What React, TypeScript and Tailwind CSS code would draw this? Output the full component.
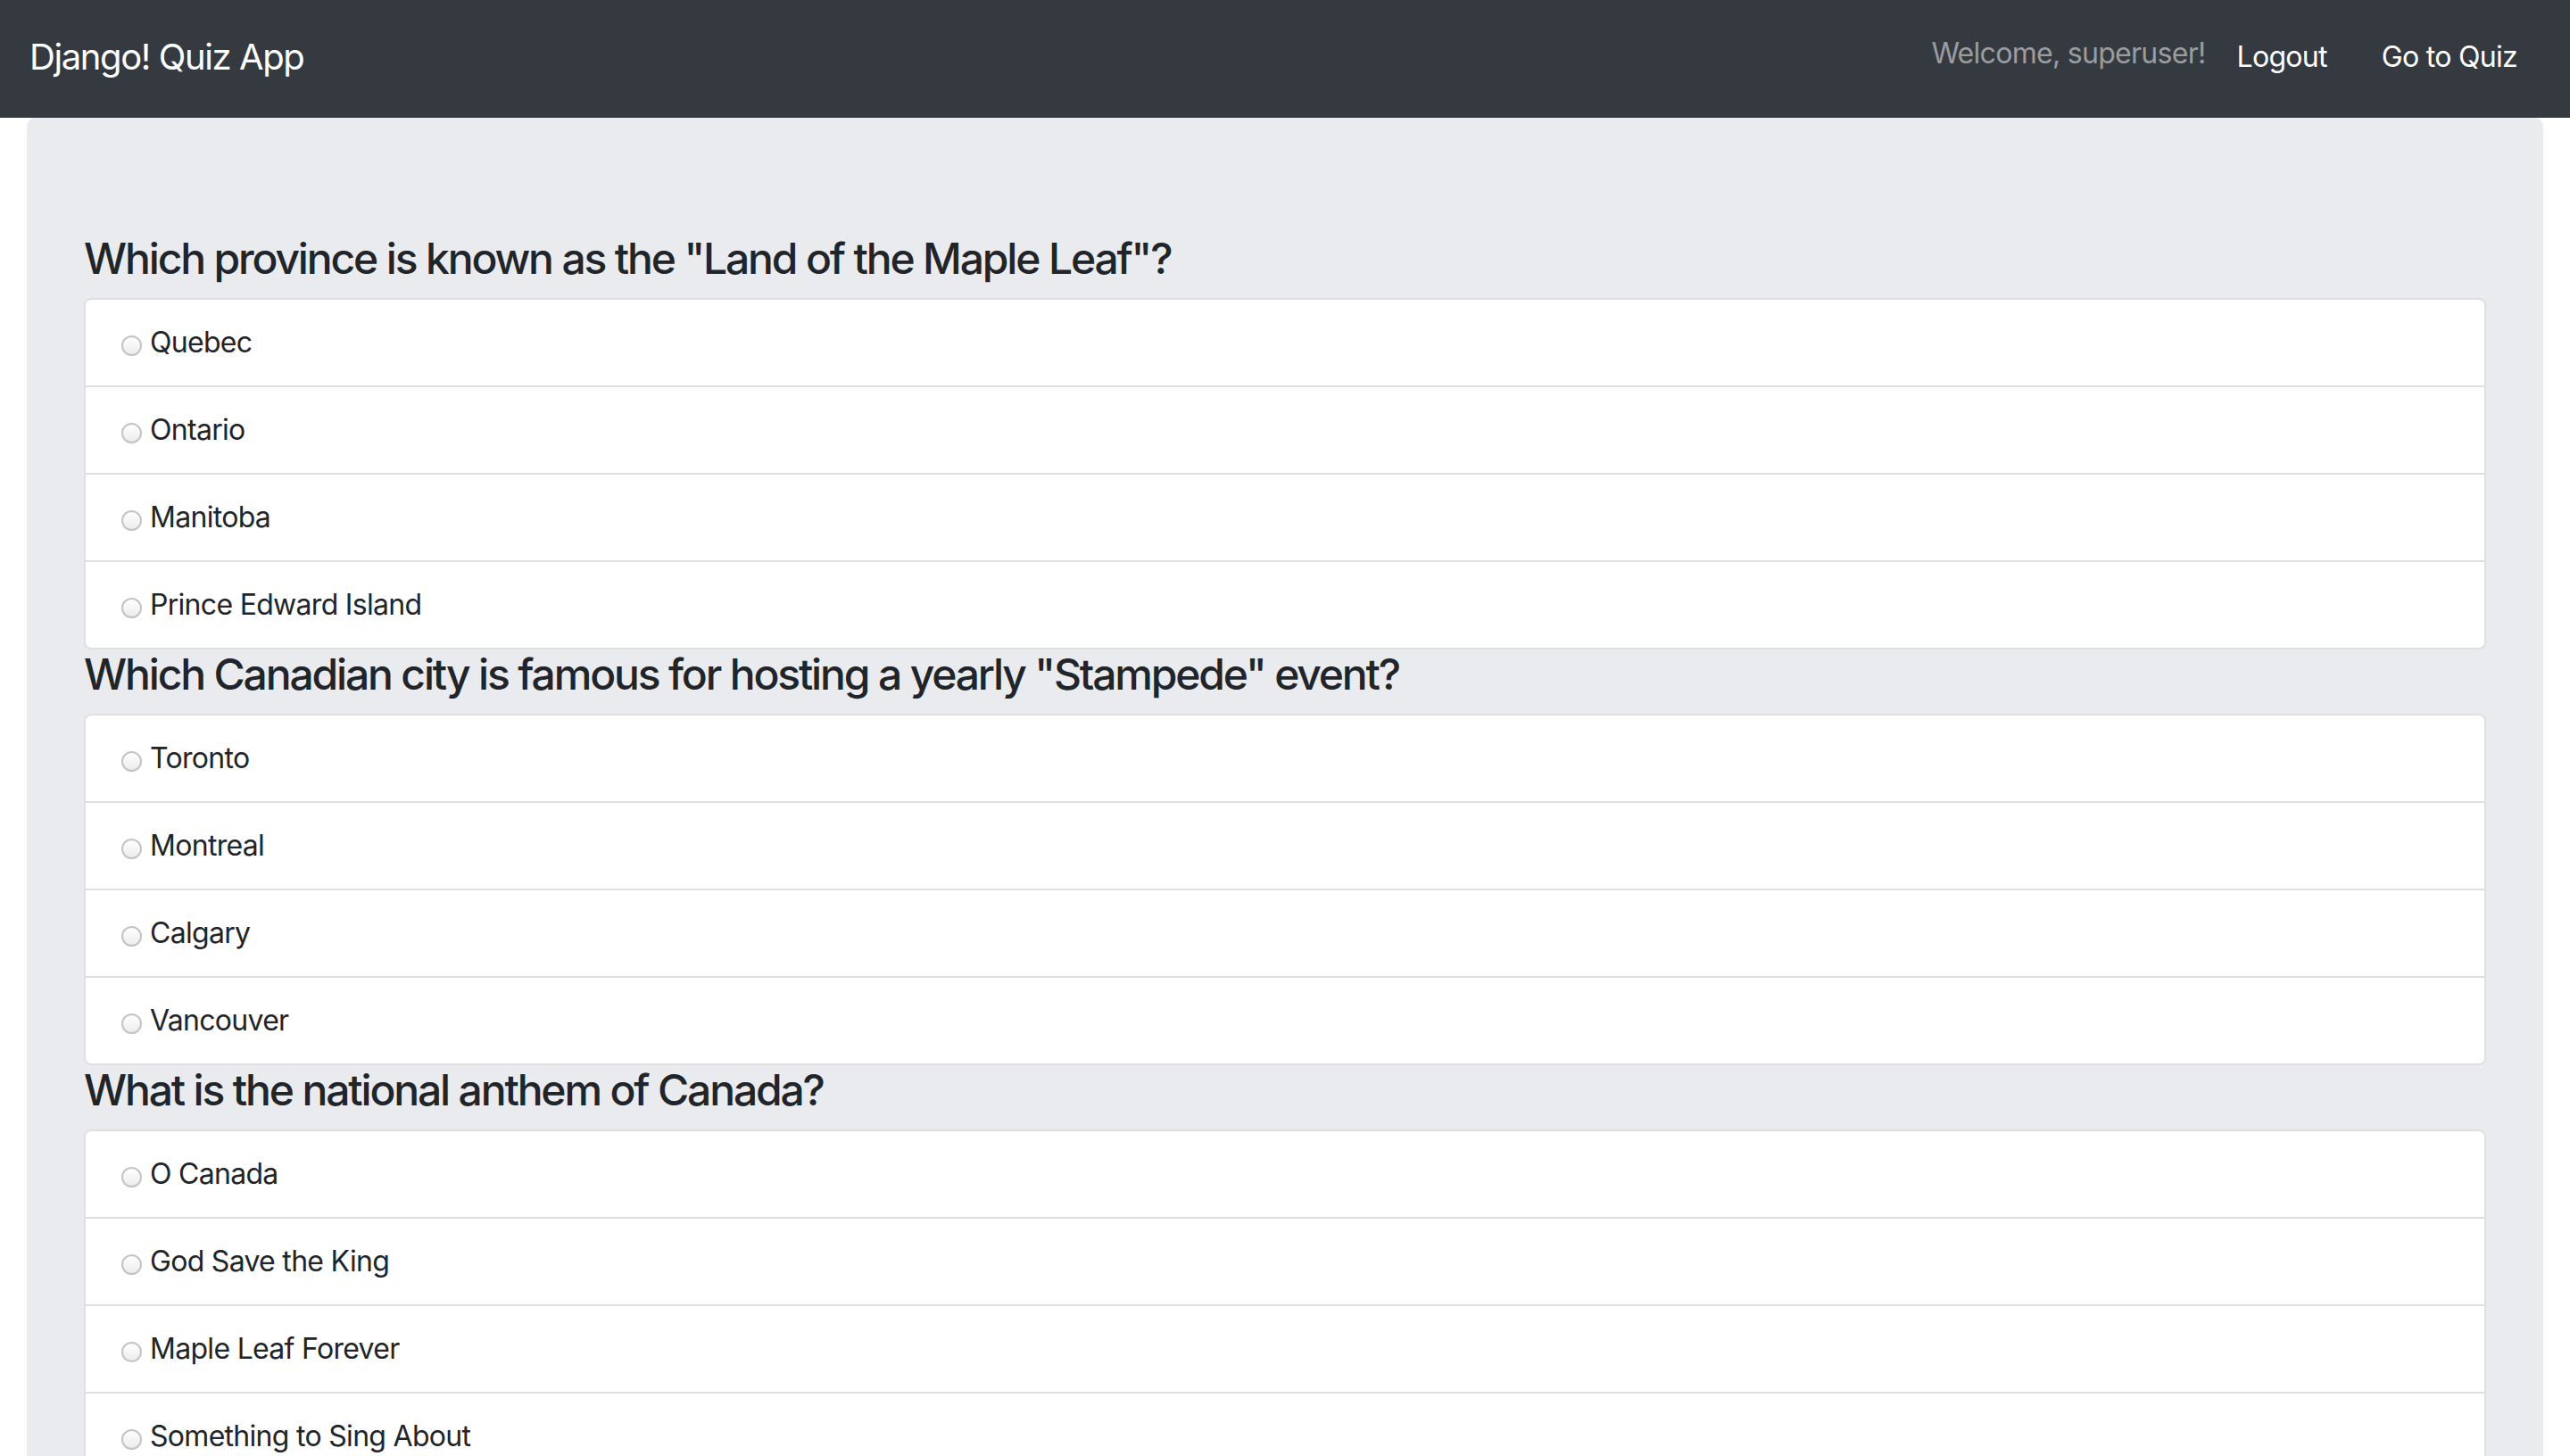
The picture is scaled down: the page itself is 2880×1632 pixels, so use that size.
const questions = [
    {
        id: 1,
        text: 'Which province is known as the "Land of the Maple Leaf"?',
        choices: ["Quebec", "Ontario", "Manitoba", "Prince Edward Island"],
    },
    {
        id: 2,
        text: 'Which Canadian city is famous for hosting a yearly "Stampede" event?',
        choices: ["Toronto", "Montreal", "Calgary", "Vancouver"],
    },
    {
        id: 3,
        text: "What is the national anthem of Canada?",
        choices: ["O Canada", "God Save the King", "Maple Leaf Forever", "Something to Sing About"],
    },
];

const Navbar = () => {
    return (
        <nav className="flex h-[132px] items-center justify-between bg-[#343a40] pb-[5px] pl-[33px] pr-[59px]">
            <a href="#" className="text-[40px] leading-[60px] tracking-[-0.035em] text-white">
                Django! Quiz App
            </a>
            <div className="flex items-center text-[32px] leading-[48px] tracking-[-0.022em]">
                <span className="mb-[8px] text-[#9a9ca0]">
                    Welcome, superuser!
                </span>
                <a href="#" className="ml-[35px] text-white">
                    Logout
                </a>
                <a href="#" className="ml-[61px] text-white">
                    Go to Quiz
                </a>
            </div>
        </nav>
    );
};

const Question = ({ question }: { question: (typeof questions)[number] }) => {
    return (
        <div>
            <h4 className="mb-[16px] text-[48px] font-medium leading-[56px] tracking-[-0.045em] text-[#212529]">
                {question.text}
            </h4>
            <ul className="divide-y-2 divide-[#dfdfdf] rounded-[8px] border-2 border-[#dfdfdf] bg-white">
                {question.choices.map((choice) => (
                    <li key={choice} className="flex items-center px-[40px] py-[24px]">
                        <input
                            type="radio"
                            name={`question-${question.id}`}
                            value={choice}
                            className="mt-[6px] mr-[9px] h-[23px] w-[23px] shrink-0 appearance-none rounded-full border-2 border-[#c4c4c4] bg-gradient-to-b from-white to-[#ececec]"
                        />
                        <label className="text-[32px] leading-[48px] tracking-[-0.022em] text-[#212529]">
                            {choice}
                        </label>
                    </li>
                ))}
            </ul>
        </div>
    );
};

export default function App() {
    return (
        <div className="min-h-screen bg-white font-['Inter',sans-serif]">
            <Navbar />
            <div className="px-[30px]">
                <div className="rounded-[10px] bg-[#e9ebef] px-[64px] pt-[130px] pb-[128px]">
                    {questions.map((question) => (
                        <Question key={question.id} question={question} />
                    ))}
                </div>
            </div>
        </div>
    );
}
